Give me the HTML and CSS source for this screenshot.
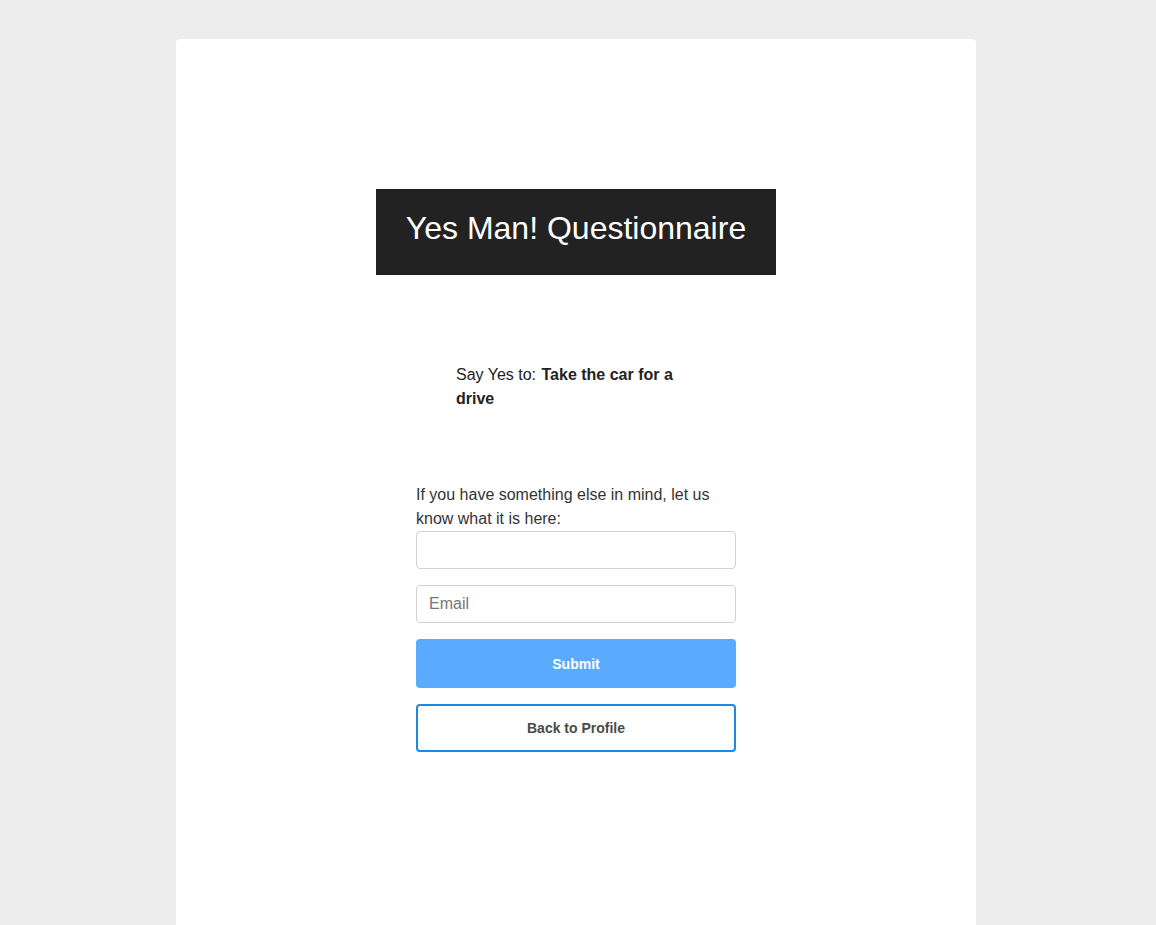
FILE: index.html
```html
<!DOCTYPE html>
<html lang="en">
<head>
<meta charset="utf-8">
<title>Yes Man! Questionnaire</title>
<link rel="stylesheet" href="styles.css">
</head>
<body>
<main class="card">
  <h1 class="title">Yes Man! Questionnaire</h1>
  <p class="prompt">Say Yes to: <strong>Take the car for a drive</strong></p>
  <form class="form">
    <label class="label" for="other">If you have something else in mind, let us know what it is here:</label>
    <input class="input" id="other" type="text">
    <input class="input" type="email" placeholder="Email">
    <button class="btn btn-submit" type="button">Submit</button>
    <button class="btn btn-back" type="button">Back to Profile</button>
  </form>
</main>
</body>
</html>
```

FILE: styles.css
```css
html, body {
  margin: 0;
  padding: 0;
  background: #ededed;
  font-family: "Liberation Sans", Arial, sans-serif;
  color: #222;
}

.card {
  box-sizing: border-box;
  width: 800px;
  min-height: 886px;
  margin: 39px 0 0 calc(50% - 402px);
  padding-top: 150px;
  background: #fff;
  border-radius: 4px 4px 0 0;
}

.title {
  box-sizing: border-box;
  width: 400px;
  height: 86px;
  margin: 0 auto;
  padding: 21px 0 0;
  background: #222;
  color: #fff;
  font-size: 32px;
  font-weight: normal;
  line-height: 37px;
  text-align: center;
}

.prompt {
  width: 240px;
  margin: 88px auto 0;
  font-size: 16px;
  line-height: 24px;
  color: #222;
}

.prompt strong {
  font-weight: bold;
  margin-left: 1px;
}

.form {
  width: 320px;
  margin: 72px auto 0;
  display: flex;
  flex-direction: column;
}

.label {
  font-size: 16px;
  line-height: 24px;
  color: #333;
}

.input {
  box-sizing: border-box;
  height: 38px;
  margin: 0 0 16px;
  padding: 0 12px;
  border: 1px solid #cfd1d6;
  border-radius: 4px;
  font-family: "Liberation Sans", Arial, sans-serif;
  font-size: 16px;
  color: #333;
  background: #fff;
}

.input::placeholder {
  color: #777;
}

.btn {
  box-sizing: border-box;
  width: 100%;
  border-radius: 4px;
  font-family: "Liberation Sans", Arial, sans-serif;
  font-size: 14px;
  font-weight: bold;
  cursor: pointer;
}

.btn-submit {
  height: 49px;
  border: none;
  background: #5aabff;
  color: #fff;
}

.btn-back {
  height: 48px;
  margin-top: 16px;
  border: 2px solid #1a8ae6;
  background: #fff;
  color: #4a4a4a;
}
```
